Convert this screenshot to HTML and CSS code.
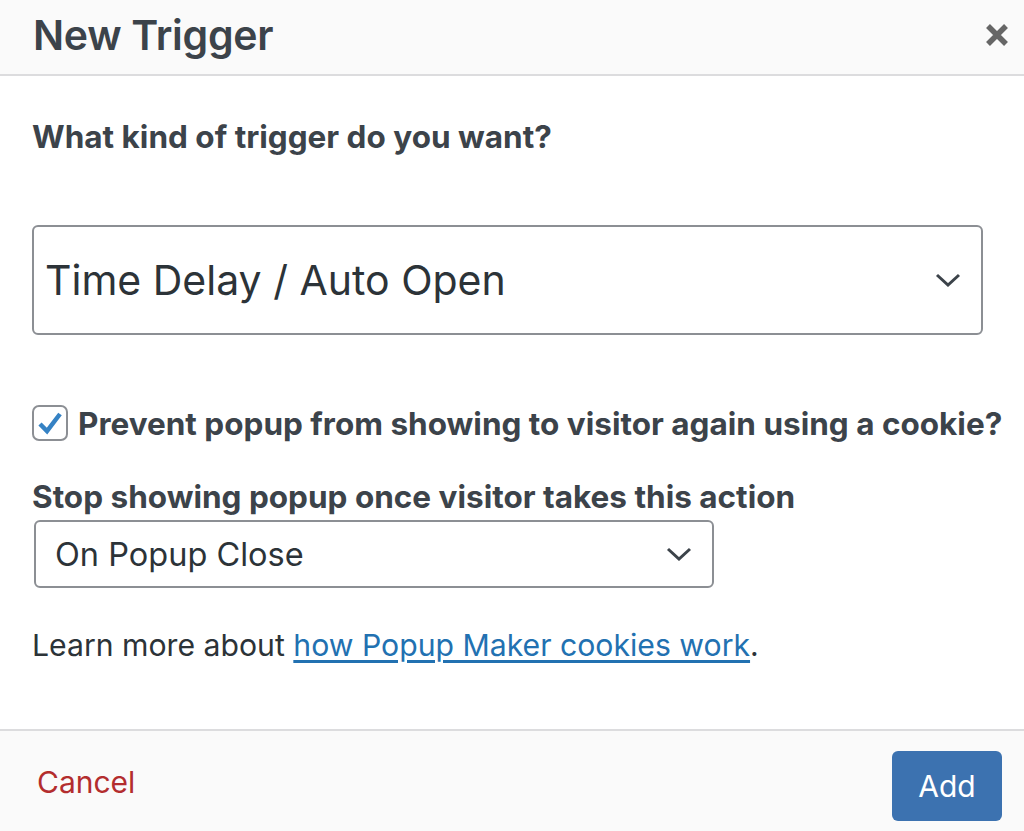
FILE: index.html
```html
<!DOCTYPE html>
<html>
<head>
<meta charset="utf-8">
<link rel="stylesheet" href="styles.css">
</head>
<body>
<div class="modal">
  <div class="header">
    <h1 class="title">New Trigger</h1>
    <button class="close" aria-label="Close">
      <svg width="26" height="26" viewBox="0 0 26 26"><path d="M4 4L22 22M22 4L4 22" stroke="#666" stroke-width="5.5" stroke-linecap="butt"/></svg>
    </button>
  </div>
  <div class="content">
    <p class="question">What kind of trigger do you want?</p>
    <div class="select select-big">
      <span>Time Delay / Auto Open</span>
      <svg class="chev" width="26" height="14" viewBox="0 0 26 14"><path d="M2 2L13 12L24 2" fill="none" stroke="#3c434a" stroke-width="3"/></svg>
    </div>
    <label class="check-row">
      <span class="checkbox">
        <svg width="28" height="28" viewBox="0 0 28 28"><path d="M4 15L11 22L24 5" fill="none" stroke="#3582c4" stroke-width="4.5" stroke-linejoin="miter"/></svg>
      </span>
      <span class="check-label">Prevent popup from showing to visitor again using a cookie?</span>
    </label>
    <p class="label2">Stop showing popup once visitor takes this action</p>
    <div class="select select-small">
      <span>On Popup Close</span>
      <svg class="chev" width="26" height="14" viewBox="0 0 26 14"><path d="M2 2L13 12L24 2" fill="none" stroke="#3c434a" stroke-width="3"/></svg>
    </div>
    <p class="learn">Learn more about <a href="#">how Popup Maker cookies work</a>.</p>
  </div>
  <div class="footer">
    <a class="cancel" href="#">Cancel</a>
    <button class="add">Add</button>
  </div>
</div>
</body>
</html>
```
FILE: styles.css
```css
* { box-sizing: border-box; }
html, body { margin: 0; padding: 0; }
body {
  font-family: Inter, "Noto Sans", "Liberation Sans", sans-serif;
  color: #3c434a;
  background: #fff;
  width: 1024px;
  height: 831px;
  overflow: hidden;
}
.modal { display: flex; flex-direction: column; height: 831px; }
.header {
  flex: none;
  height: 76px;
  background: #fafafa;
  border-bottom: 2px solid #dcdcde;
  display: flex;
  align-items: center;
  justify-content: space-between;
  padding: 0 14px 4px 33px;
}
.title {
  margin: 0;
  font-size: 41px;
  font-weight: 600;
  color: #3c434a;
  letter-spacing: -0.3px;
}
.close {
  background: none;
  border: 0;
  padding: 0;
  width: 26px;
  height: 26px;
  display: flex;
}
.content {
  flex: 1;
  min-height: 0;
  padding: 0 32px;
  background: #fff;
}
.question {
  margin: 41px 0 0;
  font-size: 31.5px;
  font-weight: 700;
  line-height: 40px;
  color: #3c434a;
}
.select {
  display: flex;
  align-items: center;
  justify-content: space-between;
  border: 2px solid #8c8f94;
  border-radius: 6px;
  background: #fff;
  color: #2c3338;
}
.select-big {
  margin-top: 68px;
  width: 951px;
  height: 110px;
  padding: 0 20px 0 11px;
  font-size: 41px;
}
.select-small {
  margin-top: 3px;
  margin-left: 2px;
  width: 680px;
  height: 68px;
  padding: 0 20px 0 19px;
  font-size: 32.5px;
}
.chev { display: block; }
.check-row {
  display: flex;
  align-items: center;
  margin-top: 70px;
  height: 36px;
}
.checkbox {
  width: 36px;
  height: 36px;
  border: 2px solid #8c8f94;
  border-radius: 7px;
  display: flex;
  align-items: center;
  justify-content: center;
  margin-right: 10px;
  flex: none;
}
.check-label {
  font-size: 31.5px;
  font-weight: 700;
  white-space: nowrap;
}
.label2 {
  margin: 36px 0 0;
  font-size: 31.5px;
  font-weight: 700;
  line-height: 40px;
}
.learn {
  margin: 37px 0 0;
  font-size: 30.2px;
  line-height: 40px;
  color: #2c3338;
}
.learn a { color: #2271b1; text-decoration: underline; text-underline-offset: 4px; }
.footer {
  flex: none;
  height: 102px;
  border-top: 2px solid #dcdcde;
  background: #fafafa;
  display: flex;
  align-items: center;
  justify-content: space-between;
  padding: 0 22px 0 37px;
}
.cancel {
  color: #b32d2e;
  font-size: 30px;
  text-decoration: none;
  margin-top: 2px;
}
.add {
  width: 110px;
  height: 70px;
  background: #3c72b0;
  color: #fff;
  border: 0;
  border-radius: 6px;
  font-family: inherit;
  font-size: 30px;
  margin-top: 10px;
}
```
